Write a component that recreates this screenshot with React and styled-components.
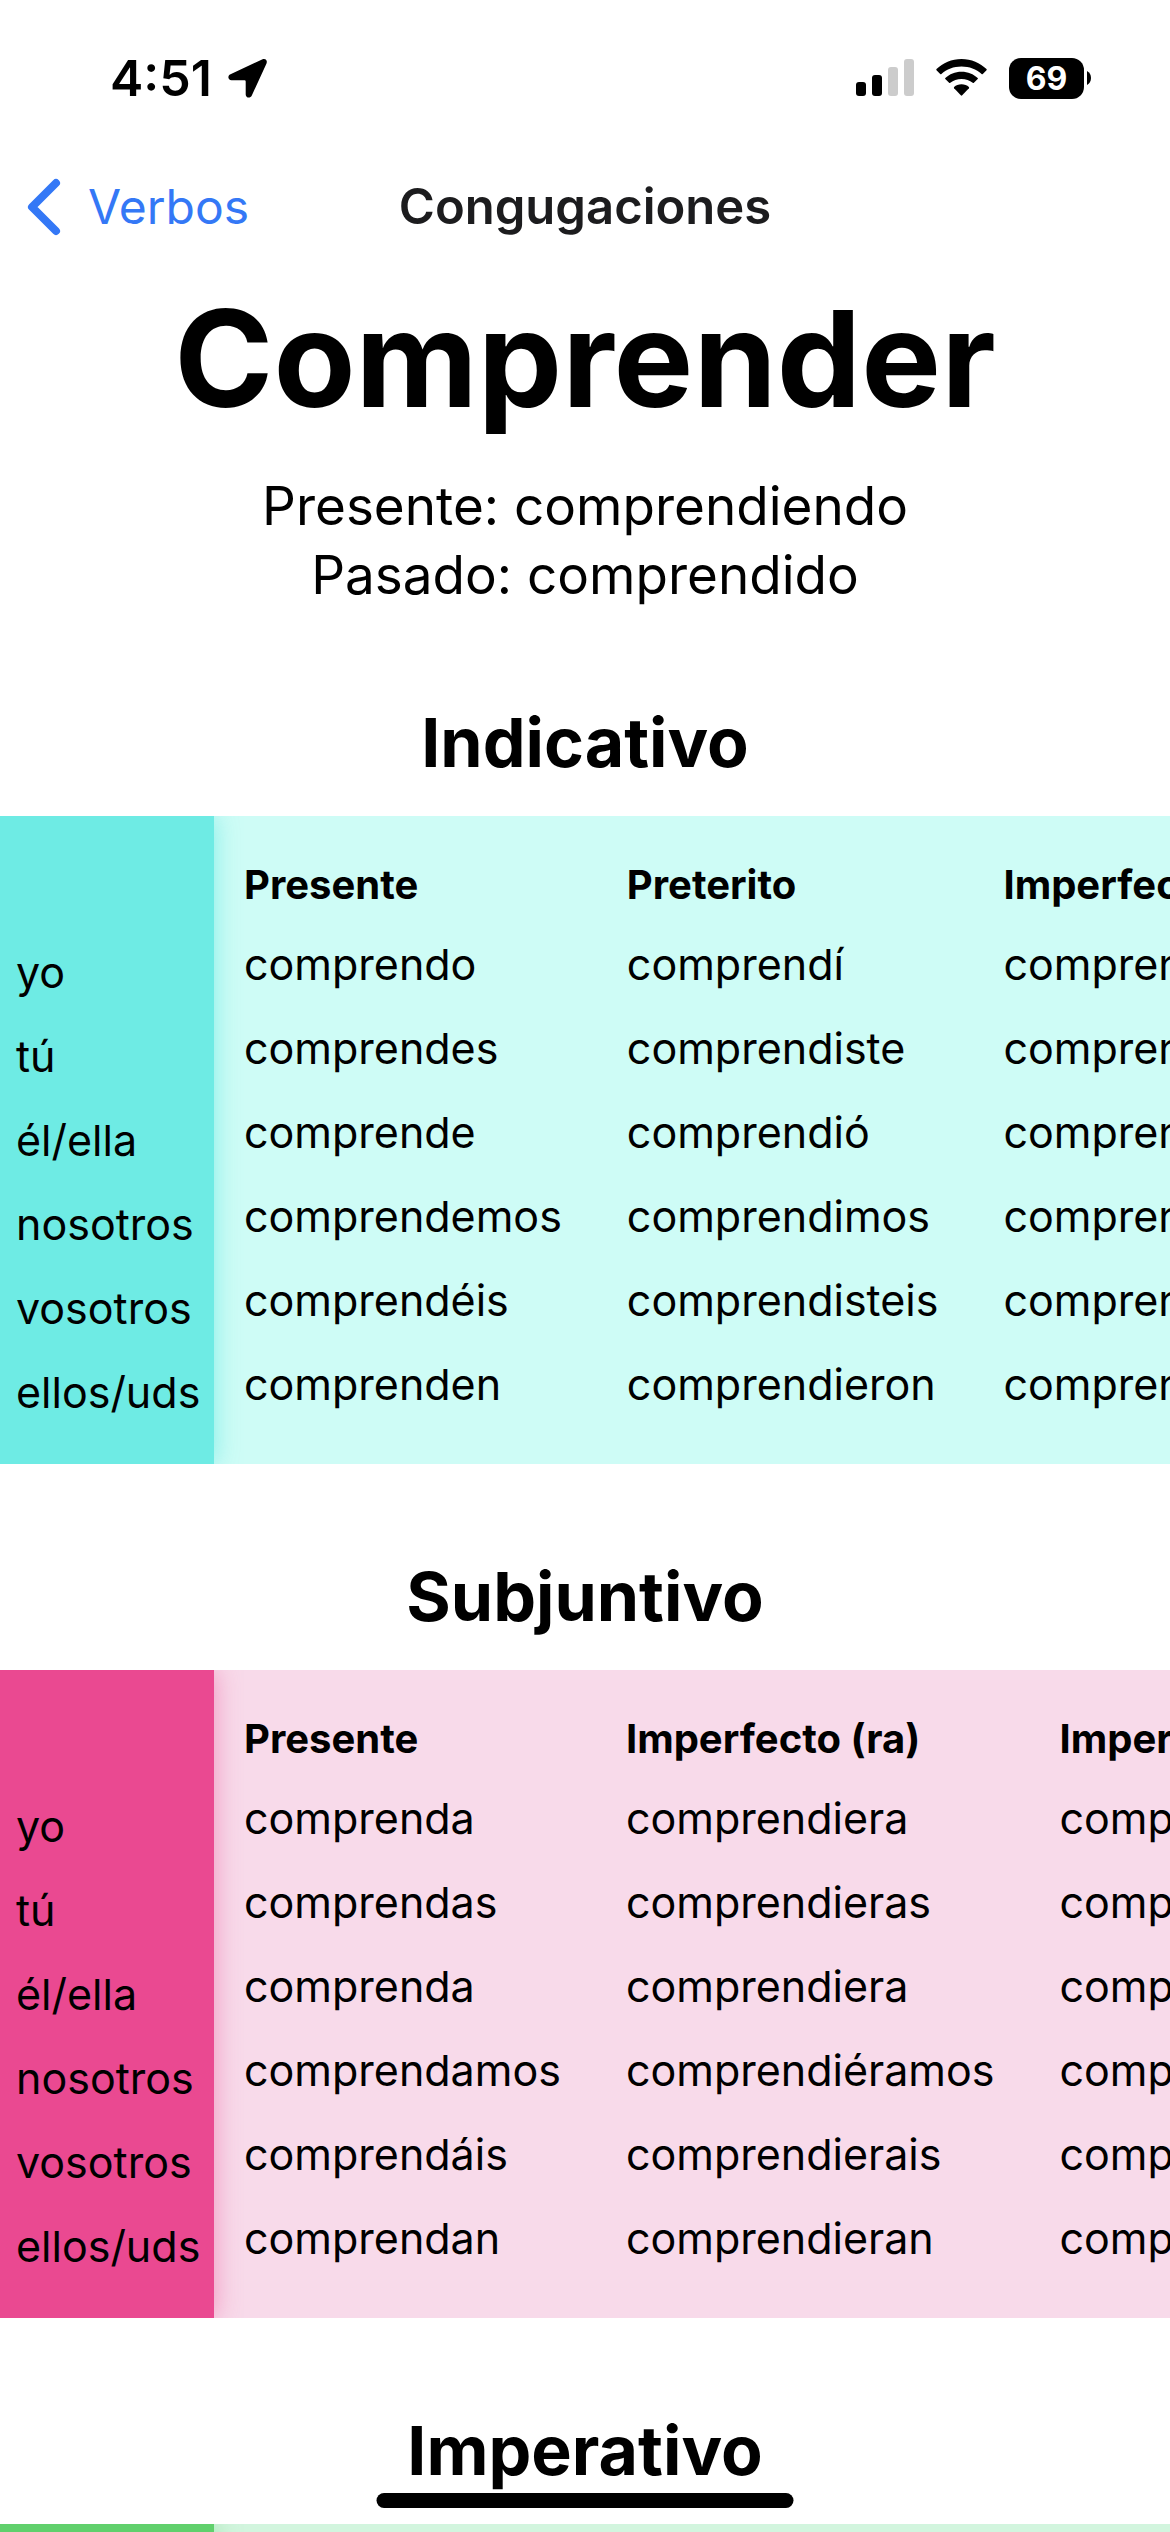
import React from "react";
import styled, { createGlobalStyle } from "styled-components";

const GlobalStyle = createGlobalStyle`
  *, *::before, *::after { box-sizing: border-box; }
  body {
    margin: 0;
    background: #ffffff;
    color: #000000;
    font-family: Inter, "Liberation Sans", sans-serif;
  }
`;

const Screen = styled.div`
  position: relative;
  display: flex;
  flex-direction: column;
  height: 100vh;
  overflow: hidden;
`;

const StatusBar = styled.header`
  display: flex;
  align-items: center;
  justify-content: space-between;
  flex: none;
  height: 156px;
  padding: 0 79px 0 110px;
`;

const StatusGroup = styled.div`
  display: flex;
  align-items: center;
  gap: ${(p) => p.$gap}px;
`;

const Clock = styled.time`
  font-size: 50px;
  font-weight: 600;
  line-height: 60px;
`;

const Battery = styled.div`
  display: flex;
  align-items: center;
  gap: 3px;
`;

const BatteryLevel = styled.span`
  display: flex;
  align-items: center;
  justify-content: center;
  width: 75px;
  height: 41px;
  border-radius: 12px;
  background: #000000;
  color: #ffffff;
  font-size: 32px;
  font-weight: 700;
  line-height: 41px;
`;

const NavBar = styled.nav`
  display: grid;
  grid-template-columns: 1fr auto 1fr;
  align-items: center;
  flex: none;
  height: 102px;
  padding: 0 27px;
`;

const BackLink = styled.a`
  display: flex;
  align-items: center;
  gap: 27px;
  color: #3478f6;
  font-size: 48px;
  line-height: 60px;
  text-decoration: none;
`;

const NavTitle = styled.span`
  color: #1c1c1e;
  font-size: 49px;
  font-weight: 600;
  line-height: 60px;
`;

const Content = styled.main`
  flex: 1;
  min-height: 0;
  overflow-y: auto;
  scrollbar-width: none;
`;

const Verb = styled.h1`
  margin: 0;
  padding-top: 14px;
  font-size: 134px;
  font-weight: 700;
  line-height: 172px;
  text-align: center;
`;

const Participles = styled.p`
  margin: 0;
  padding: 28px 0 17px;
  font-size: 53px;
  line-height: 69px;
  text-align: center;
`;

const Mood = styled.section`
  padding-top: 71px;
  padding-bottom: 17px;
`;

const MoodTitle = styled.h2`
  margin: 0;
  padding-bottom: 30px;
  font-size: 68px;
  font-weight: 700;
  line-height: 88px;
  text-align: center;
`;

const Panel = styled.div`
  display: flex;
  background: ${(p) => p.$color};
`;

const Pronouns = styled.ul`
  z-index: 1;
  flex: none;
  width: 214px;
  margin: 0;
  padding: 114px 0 30px 16px;
  list-style: none;
  background: ${(p) => p.$color};
  box-shadow: 0 0 24px ${(p) => p.$shadow};
  clip-path: inset(0 -30px 0 0);
`;

const Pronoun = styled.li`
  font-size: 43px;
  line-height: 84px;
`;

const Scroller = styled.div`
  flex: 1;
  min-width: 0;
  padding: 42px 0 38px 30px;
  overflow-x: auto;
  scrollbar-width: none;
`;

const Forms = styled.table`
  border-collapse: collapse;
`;

const Tense = styled.th`
  height: 64px;
  padding: 0 65px 0 0;
  font-size: 40px;
  font-weight: 700;
  line-height: 54px;
  text-align: left;
  vertical-align: top;
  white-space: nowrap;
`;

const Form = styled.td`
  padding: 0 65px 0 0;
  font-size: 43px;
  line-height: 84px;
  white-space: nowrap;
`;

const HomeIndicator = styled.div`
  position: absolute;
  bottom: 24px;
  left: 50%;
  width: 417px;
  height: 15px;
  border-radius: 8px;
  background: #000000;
  transform: translateX(-50%);
`;

const pronouns = ["yo", "tú", "él/ella", "nosotros", "vosotros", "ellos/uds"];

const moods = [
  {
    name: "Indicativo",
    strong: "#6eebe4",
    soft: "#cefcf6",
    shadow: "rgba(110, 235, 228, 0.8)",
    persons: pronouns,
    tenses: ["Presente", "Preterito", "Imperfecto"],
    rows: [
      ["comprendo", "comprendí", "comprendía"],
      ["comprendes", "comprendiste", "comprendías"],
      ["comprende", "comprendió", "comprendía"],
      ["comprendemos", "comprendimos", "comprendíamos"],
      ["comprendéis", "comprendisteis", "comprendíais"],
      ["comprenden", "comprendieron", "comprendían"],
    ],
  },
  {
    name: "Subjuntivo",
    strong: "#ea4991",
    soft: "#f8daea",
    shadow: "rgba(234, 73, 145, 0.5)",
    persons: pronouns,
    tenses: ["Presente", "Imperfecto (ra)", "Imperfecto (se)"],
    rows: [
      ["comprenda", "comprendiera", "comprendiese"],
      ["comprendas", "comprendieras", "comprendieses"],
      ["comprenda", "comprendiera", "comprendiese"],
      ["comprendamos", "comprendiéramos", "comprendiésemos"],
      ["comprendáis", "comprendierais", "comprendieseis"],
      ["comprendan", "comprendieran", "comprendiesen"],
    ],
  },
  {
    name: "Imperativo",
    strong: "#60d06c",
    soft: "#d2f5de",
    shadow: "rgba(96, 208, 108, 0.5)",
    persons: pronouns.slice(1),
    tenses: ["Afirmativo", "Negativo"],
    rows: [
      ["comprende", "no comprendas"],
      ["comprenda", "no comprenda"],
      ["comprendamos", "no comprendamos"],
      ["comprended", "no comprendáis"],
      ["comprendan", "no comprendan"],
    ],
  },
];

function LocationIcon() {
  return (
    <svg width="39" height="39" viewBox="0 0 39 39" aria-hidden="true">
      <path
        d="M34.600.300C37.500-.800 39.700 1.600 38.500 4.400L23.800 36.500C22.300 39.800 17.700 39 17.700 35.400V22.400Q17.700 21.300 16.600 21.300H3.500C0 21.300-.900 16.800 2.500 15.200Z"
        fill="#000"
      />
    </svg>
  );
}

function SignalIcon() {
  return (
    <svg width="58" height="38" viewBox="0 0 58 38" aria-hidden="true">
      <rect x="0" y="23" width="10" height="14" rx="3" />
      <rect x="16" y="16" width="10" height="21" rx="3" />
      <rect x="32" y="8" width="10" height="29" rx="3" fill="#cccccc" />
      <rect x="48" y="0" width="10" height="37" rx="3" fill="#cccccc" />
    </svg>
  );
}

function WifiIcon() {
  return (
    <svg width="51" height="38" viewBox="0 0 51 38" aria-hidden="true">
      <path d="M25.500 0C35.300 0 44.200 3.900 50.500 10.100Q51 10.700 50.500 11.300L46.800 15Q46.200 15.500 45.600 15C40.400 10.100 33.300 7.400 25.500 7.400S10.600 10.100 5.400 15Q4.800 15.500 4.200 15L.500 11.300Q0 10.700.500 10.100C6.800 3.900 15.700 0 25.500 0Z" />
      <path d="M25.500 12.700C32 12.700 37.500 15.100 41.700 19Q42.200 19.500 41.700 20.100L37.900 23.800Q37.300 24.300 36.700 23.800C33.700 21.200 29.800 19.900 25.500 19.900S17.300 21.200 14.300 23.800Q13.700 24.300 13.100 23.800L9.300 20.100Q8.800 19.500 9.300 19C13.500 15.100 19 12.700 25.500 12.700Z" />
      <path d="M25.500 25.300C28.500 25.300 31 26.300 32.900 28Q33.400 28.600 32.900 29.200L26.200 36.300Q25.500 37 24.800 36.300L18.100 29.200Q17.600 28.600 18.100 28C20 26.300 22.500 25.300 25.500 25.300Z" />
    </svg>
  );
}

function BatteryTip() {
  return (
    <svg width="4" height="14" viewBox="0 0 4 14" aria-hidden="true">
      <path d="M0 0C2.500 1.200 4 3.800 4 7S2.500 12.800 0 14Z" />
    </svg>
  );
}

function ChevronIcon() {
  return (
    <svg width="34" height="58" viewBox="0 0 34 58" aria-hidden="true">
      <path
        d="M29 5L5 29L29 53"
        fill="none"
        stroke="currentColor"
        strokeWidth="8"
        strokeLinecap="round"
        strokeLinejoin="round"
      />
    </svg>
  );
}

function MoodSection({ mood }) {
  return (
    <Mood>
      <MoodTitle>{mood.name}</MoodTitle>
      <Panel $color={mood.soft}>
        <Pronouns $color={mood.strong} $shadow={mood.shadow}>
          {mood.persons.map((person) => (
            <Pronoun key={person}>{person}</Pronoun>
          ))}
        </Pronouns>
        <Scroller>
          <Forms aria-label={mood.name}>
            <thead>
              <tr>
                {mood.tenses.map((tense) => (
                  <Tense key={tense} scope="col">
                    {tense}
                  </Tense>
                ))}
              </tr>
            </thead>
            <tbody>
              {mood.rows.map((row, i) => (
                <tr key={mood.persons[i]}>
                  {row.map((form, j) => (
                    <Form key={mood.tenses[j]}>{form}</Form>
                  ))}
                </tr>
              ))}
            </tbody>
          </Forms>
        </Scroller>
      </Panel>
    </Mood>
  );
}

export default function App() {
  return (
    <Screen>
      <GlobalStyle />
      <StatusBar>
        <StatusGroup $gap={16}>
          <Clock>4:51</Clock>
          <LocationIcon />
        </StatusGroup>
        <StatusGroup $gap={22}>
          <SignalIcon />
          <WifiIcon />
          <Battery>
            <BatteryLevel>69</BatteryLevel>
            <BatteryTip />
          </Battery>
        </StatusGroup>
      </StatusBar>
      <NavBar>
        <BackLink href="#verbos">
          <ChevronIcon />
          Verbos
        </BackLink>
        <NavTitle>Congugaciones</NavTitle>
      </NavBar>
      <Content>
        <Verb>Comprender</Verb>
        <Participles>
          Presente: comprendiendo
          <br />
          Pasado: comprendido
        </Participles>
        {moods.map((mood) => (
          <MoodSection key={mood.name} mood={mood} />
        ))}
      </Content>
      <HomeIndicator />
    </Screen>
  );
}
